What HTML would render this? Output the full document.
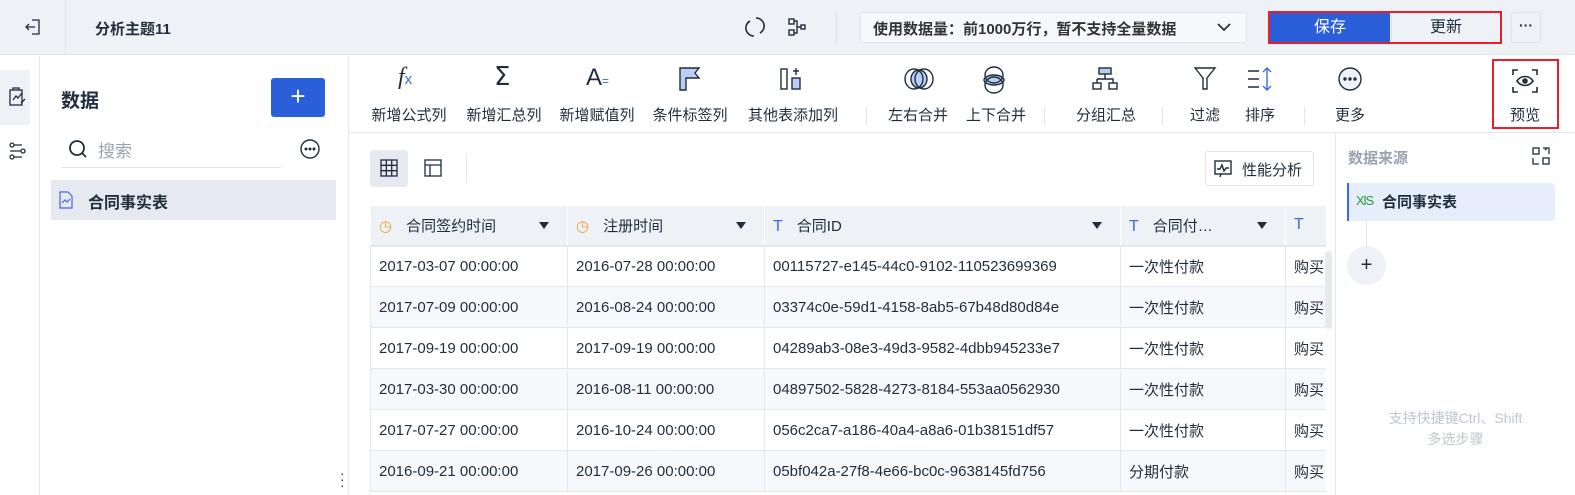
<!DOCTYPE html>
<html><head><meta charset="utf-8"><style>
*{box-sizing:border-box;margin:0;padding:0}
body{width:1575px;height:495px;overflow:hidden;background:#fff;font-family:"Liberation Sans","Noto Sans CJK SC",sans-serif;color:#1f2d3d;position:relative;font-size:14px}
.a{position:absolute}
.top{left:0;top:0;width:1575px;height:55px;background:#eef1f6;border-bottom:1px solid #dfe3ea}
.tb{text-align:center;font-size:15px;color:#1f2d3d}
.tbi{position:absolute;top:66px}
.lbl{position:absolute;top:104px;font-size:15px;white-space:nowrap;transform:translateX(-50%)}
.sep{position:absolute;top:107px;width:1px;height:18px;background:#dfe3ea}
table{border-collapse:collapse;position:absolute;left:370px;top:205px;table-layout:fixed}
td{border:1px solid #e4e7ee;height:41px;padding:0 8px;font-size:15px;white-space:nowrap;overflow:hidden}
th{background:#eef1f6;border:1px solid #fff;border-bottom:2px solid #e4e7ee;height:40px;text-align:left;font-weight:normal;font-size:15px;padding:0 8px;white-space:nowrap;overflow:hidden;position:relative}
tr:nth-child(odd) td{background:#f7f8fc}
.ar{position:absolute;right:18px;top:16px;width:0;height:0;border-left:5px solid transparent;border-right:5px solid transparent;border-top:7px solid #1f2d3d}
.T{color:#3d6be0;margin-right:14px;font-size:16px}
</style></head><body>
<div class="a top"></div>
<div class="a" style="left:65px;top:0;width:1px;height:55px;background:#dfe3ea"></div>
<svg class="a" style="left:24px;top:18px" width="18" height="18" viewBox="0 0 18 18" fill="none" stroke="#1f2d3d" stroke-width="1.3"><path d="M8 2h7v14H8M11 9H2M5 6L2 9l3 3"/></svg>
<div class="a" style="left:95px;top:18px;font-size:15px;font-weight:bold">分析主题11</div>
<svg class="a" style="left:744px;top:16px" width="22" height="22" viewBox="0 0 22 22" fill="none" stroke="#1f2d3d" stroke-width="1.6"><path d="M6 5a8 8 0 0 0 4 15M16 17a8 8 0 0 0-4-15"/></svg>
<svg class="a" style="left:786px;top:16px" width="22" height="22" viewBox="0 0 22 22" fill="none" stroke="#1f2d3d" stroke-width="1.4"><rect x="3" y="3" width="5" height="5"/><rect x="3" y="14" width="5" height="5"/><rect x="15" y="9" width="4" height="4"/><path d="M8 5h3v12H8M11 11h4"/></svg>
<div class="a" style="left:836px;top:12px;width:1px;height:32px;background:#dfe3ea"></div>
<div class="a" style="left:860px;top:12px;width:387px;height:31px;border:1px solid #dfe3ea;border-radius:3px;background:#f7f8fb;font-size:15px;font-weight:bold;padding:5px 12px;color:#333">使用数据量：前1000万行，暂不支持全量数据</div>
<svg class="a" style="left:1216px;top:21px" width="16" height="12" viewBox="0 0 16 12" fill="none" stroke="#333" stroke-width="1.8"><path d="M2 3l6 6 6-6"/></svg>
<div class="a" style="left:1268px;top:11px;width:234px;height:33px;border:2px solid #e81e2b"></div>
<div class="a" style="left:1270px;top:13px;width:120px;height:29px;background:#2b5fd9;color:#fff;font-size:16px;text-align:center;line-height:29px">保存</div>
<div class="a" style="left:1391px;top:13px;width:109px;height:29px;background:#eef1f6;font-size:16px;text-align:center;line-height:29px;border-left:1px solid #dfe3ea">更新</div>
<div class="a" style="left:1511px;top:12px;width:30px;height:31px;border:1px solid #dfe3ea;border-radius:2px;text-align:center;line-height:24px;font-weight:bold">···</div>
<!-- left rail -->
<div class="a" style="left:0;top:56px;width:40px;height:439px;background:#fff;border-right:1px solid #e4e7ee"></div>
<div class="a" style="left:0;top:70px;width:30px;height:55px;background:#eef1f6"></div>
<svg class="a" style="left:8px;top:87px" width="20" height="20" viewBox="0 0 20 20" fill="none" stroke="#1f2d3d" stroke-width="1.3"><rect x="2" y="3" width="12" height="15"/><path d="M5 3V1h6v2M5 13l3-4 2 2 4-5M13 16l4-4"/></svg>
<svg class="a" style="left:8px;top:141px" width="20" height="20" viewBox="0 0 20 20" fill="none" stroke="#1f2d3d" stroke-width="1.3"><circle cx="4" cy="4" r="2"/><circle cx="4" cy="16" r="2"/><circle cx="15" cy="10" r="2"/><path d="M6 4h8M2 10h11M6 16h8"/></svg>
<!-- data panel -->
<div class="a" style="left:348px;top:56px;width:1px;height:439px;background:#e4e7ee"></div>
<div class="a" style="left:61px;top:86px;font-size:19px;font-weight:bold">数据</div>
<div class="a" style="left:271px;top:78px;width:54px;height:39px;background:#2b5fd9;border-radius:3px;color:#fff;text-align:center;line-height:36px;font-size:26px">+</div>
<svg class="a" style="left:67px;top:138px" width="22" height="22" viewBox="0 0 22 22" fill="none" stroke="#1f2d3d" stroke-width="1.8"><circle cx="10" cy="10" r="7"/><path d="M15 15l4 4"/></svg>
<div class="a" style="left:98px;top:137px;font-size:17px;color:#9aa3b0">搜索</div>
<div class="a" style="left:61px;top:167px;width:220px;height:1px;background:#dfe3ea"></div>
<svg class="a" style="left:299px;top:138px" width="22" height="22" viewBox="0 0 22 22" fill="none" stroke="#1f2d3d" stroke-width="1.4"><circle cx="11" cy="11" r="9"/><circle cx="7" cy="11" r=".8" fill="#1f2d3d"/><circle cx="11" cy="11" r=".8" fill="#1f2d3d"/><circle cx="15" cy="11" r=".8" fill="#1f2d3d"/></svg>
<div class="a" style="left:51px;top:180px;width:285px;height:40px;background:#e6e9f0"></div>
<svg class="a" style="left:58px;top:191px" width="16" height="18" viewBox="0 0 16 18" fill="none" stroke="#3d6be0" stroke-width="1.2"><path d="M2 1h8l4 4v12H2z"/><path d="M4 12l3-3 2 2 3-3"/></svg>
<div class="a" style="left:88px;top:189px;font-size:16px;font-weight:bold">合同事实表</div>
<div class="a" style="left:340px;top:470px;font-size:14px;line-height:6px;color:#333">·<br>·<br>·</div>
<!-- toolbar -->
<div class="a" style="left:349px;top:132px;width:1226px;height:1px;background:#e4e7ee"></div>
<div class="tbi" style="left:398px;font-style:italic;font-family:'Liberation Serif',serif;font-size:24px;top:64px;color:#1f2d3d">f<span style="font-size:15px;color:#3d6be0;font-style:normal;font-family:'Liberation Sans'">x</span></div>
<div class="tbi" style="left:494px;font-size:26px;top:62px;font-family:'DejaVu Sans'">Σ</div>
<div class="tbi" style="left:586px;font-size:24px;top:64px">A<span style="font-size:12px;color:#3d6be0">=</span></div>
<svg class="tbi" style="left:678px" width="24" height="26" viewBox="0 0 24 26" fill="none" stroke="#1f2d3d" stroke-width="1.4"><path d="M2 2h19l-4 5 4 5H8v12H2z" fill="#b9cdf5"/></svg>
<svg class="tbi" style="left:780px" width="24" height="26" viewBox="0 0 24 26" fill="none" stroke="#1f2d3d" stroke-width="1.4"><rect x="1" y="3" width="6" height="20"/><rect x="12" y="12" width="8" height="11" fill="#b9cdf5"/><path d="M16 2v7M13 5h6"/></svg>
<div class="sep" style="left:866px"></div>
<svg class="tbi" style="left:903px" width="32" height="26" viewBox="0 0 32 26" fill="none" stroke="#1f2d3d" stroke-width="1.4"><path d="M16 4a8 9 0 0 1 0 18a8 9 0 0 1 0-18z" fill="#b9cdf5"/><ellipse cx="11" cy="13" rx="9" ry="10"/><ellipse cx="21" cy="13" rx="9" ry="10"/></svg>
<svg class="tbi" style="left:980px" width="28" height="28" viewBox="0 0 28 28" fill="none" stroke="#1f2d3d" stroke-width="1.4"><path d="M4 14a10 5 0 0 0 20 0a10 5 0 0 0-20 0z" fill="#b9cdf5"/><ellipse cx="14" cy="9" rx="9" ry="8"/><ellipse cx="14" cy="19" rx="9" ry="8"/></svg>
<div class="sep" style="left:1044px"></div>
<svg class="tbi" style="left:1092px" width="26" height="26" viewBox="0 0 26 26" fill="none" stroke="#1f2d3d" stroke-width="1.4"><rect x="7" y="2" width="12" height="6" fill="#b9cdf5"/><path d="M13 8v5M5 13h16v4M5 13v4"/><rect x="1" y="17" width="8" height="6"/><rect x="17" y="17" width="8" height="6"/></svg>
<div class="sep" style="left:1162px"></div>
<svg class="tbi" style="left:1193px" width="24" height="26" viewBox="0 0 24 26" fill="none" stroke="#1f2d3d" stroke-width="1.4"><path d="M2 2h20l-8 10v11h-4V12z"/></svg>
<svg class="tbi" style="left:1246px" width="28" height="26" viewBox="0 0 28 26" fill="none" stroke="#1f2d3d" stroke-width="1.4"><path d="M2 5h11M2 13h11M2 21h11"/><path d="M21 2v22M17 6l4-4 4 4M17 20l4 4 4-4" stroke="#3d6be0"/></svg>
<div class="sep" style="left:1304px"></div>
<svg class="tbi" style="left:1337px" width="26" height="26" viewBox="0 0 26 26" fill="none" stroke="#1f2d3d" stroke-width="1.4"><circle cx="13" cy="13" r="11" fill="#eef2fb"/><circle cx="8" cy="13" r="1" fill="#1f2d3d"/><circle cx="13" cy="13" r="1" fill="#1f2d3d"/><circle cx="18" cy="13" r="1" fill="#1f2d3d"/></svg>
<div class="a" style="left:1492px;top:59px;width:67px;height:70px;border:2px solid #e81e2b"></div>
<svg class="tbi" style="left:1512px;top:69px" width="26" height="24" viewBox="0 0 26 24" fill="none" stroke="#1f2d3d" stroke-width="1.6"><path d="M1 6V1h5M20 1h5v5M1 18v5h5M20 23h5v-5"/><path d="M5 12c4-6 12-6 16 0c-4 6-12 6-16 0z"/><circle cx="13" cy="12" r="2" fill="#1f2d3d"/></svg>
<div class="lbl" style="left:409px">新增公式列</div>
<div class="lbl" style="left:504px">新增汇总列</div>
<div class="lbl" style="left:597px">新增赋值列</div>
<div class="lbl" style="left:690px">条件标签列</div>
<div class="lbl" style="left:793px">其他表添加列</div>
<div class="lbl" style="left:918px">左右合并</div>
<div class="lbl" style="left:996px">上下合并</div>
<div class="lbl" style="left:1106px">分组汇总</div>
<div class="lbl" style="left:1205px">过滤</div>
<div class="lbl" style="left:1260px">排序</div>
<div class="lbl" style="left:1350px">更多</div>
<div class="lbl" style="left:1525px">预览</div>
<!-- table tools -->
<div class="a" style="left:370px;top:150px;width:38px;height:37px;background:#e6e9f0;border-radius:3px"></div>
<svg class="a" style="left:380px;top:159px" width="18" height="18" viewBox="0 0 18 18" fill="none" stroke="#1f2d3d" stroke-width="1.3"><rect x="1" y="1" width="16" height="16"/><path d="M6.3 1v16M11.7 1v16M1 6.3h16M1 11.7h16"/></svg>
<svg class="a" style="left:424px;top:159px" width="18" height="18" viewBox="0 0 18 18" fill="none" stroke="#1f2d3d" stroke-width="1.3"><rect x="1" y="1" width="16" height="16"/><path d="M1 6h16M6 6v11"/></svg>
<div class="a" style="left:466px;top:155px;width:1px;height:28px;background:#e4e7ee"></div>
<div class="a" style="left:1205px;top:151px;width:109px;height:35px;border:1px solid #dfe3ea;border-radius:3px;font-size:15px;padding:7px 0 0 36px">性能分析</div>
<svg class="a" style="left:1214px;top:160px" width="18" height="18" viewBox="0 0 18 18" fill="none" stroke="#1f2d3d" stroke-width="1.4"><rect x="1" y="1" width="16" height="13"/><path d="M3 9h3l2-4 2 6 2-3h3M7 14l-1 3"/></svg>
<table>
<colgroup><col style="width:197px"><col style="width:197px"><col style="width:356px"><col style="width:165px"><col style="width:41px"></colgroup>
<tr><th><span style="color:#f0a030;margin-right:14px">◷</span>合同签约时间<i class="ar"></i></th><th><span style="color:#f0a030;margin-right:14px">◷</span>注册时间<i class="ar"></i></th><th><span class="T">T</span>合同ID<i class="ar"></i></th><th><span class="T">T</span>合同付…<i class="ar"></i></th><th><span class="T">T</span></th></tr>
<tr><td>2017-03-07 00:00:00</td><td>2016-07-28 00:00:00</td><td>00115727-e145-44c0-9102-110523699369</td><td>一次性付款</td><td>购买</td></tr>
<tr><td>2017-07-09 00:00:00</td><td>2016-08-24 00:00:00</td><td>03374c0e-59d1-4158-8ab5-67b48d80d84e</td><td>一次性付款</td><td>购买</td></tr>
<tr><td>2017-09-19 00:00:00</td><td>2017-09-19 00:00:00</td><td>04289ab3-08e3-49d3-9582-4dbb945233e7</td><td>一次性付款</td><td>购买</td></tr>
<tr><td>2017-03-30 00:00:00</td><td>2016-08-11 00:00:00</td><td>04897502-5828-4273-8184-553aa0562930</td><td>一次性付款</td><td>购买</td></tr>
<tr><td>2017-07-27 00:00:00</td><td>2016-10-24 00:00:00</td><td>056c2ca7-a186-40a4-a8a6-01b38151df57</td><td>一次性付款</td><td>购买</td></tr>
<tr><td>2016-09-21 00:00:00</td><td>2017-09-26 00:00:00</td><td>05bf042a-27f8-4e66-bc0c-9638145fd756</td><td>分期付款</td><td>购买</td></tr>
</table>
<div class="a" style="left:1326px;top:205px;width:9px;height:290px;background:#fff"></div>
<div class="a" style="left:1325px;top:251px;width:7px;height:78px;background:#e6e9f0;border-radius:4px"></div>
<!-- right panel -->
<div class="a" style="left:1335px;top:133px;width:1px;height:362px;background:#e4e7ee"></div>
<div class="a" style="left:1348px;top:147px;font-size:15px;font-weight:bold;color:#9aa3b0">数据来源</div>
<svg class="a" style="left:1532px;top:147px" width="18" height="18" viewBox="0 0 18 18" fill="none" stroke="#1f2d3d" stroke-width="1.3"><rect x="1" y="1" width="6" height="6"/><rect x="11" y="11" width="6" height="6"/><path d="M1 11v6h6M11 1h6v6M13 3l2-2"/></svg>
<div class="a" style="left:1347px;top:183px;width:208px;height:38px;background:#e6edfb;border-left:2px solid #3d6be0;border-radius:0 4px 4px 0"></div>
<div class="a" style="left:1356px;top:193px;font-size:13px;color:#2a9d3a;font-family:'Liberation Sans Narrow','Liberation Sans';letter-spacing:-1px">XlS</div>
<div class="a" style="left:1382px;top:191px;font-size:15px;font-weight:bold">合同事实表</div>
<div class="a" style="left:1366px;top:221px;width:1px;height:28px;background:#dfe3ea"></div>
<div class="a" style="left:1347px;top:246px;width:39px;height:39px;border-radius:50%;background:#eef1f6;text-align:center;line-height:38px;font-size:20px">+</div>
<div class="a" style="left:1336px;top:408px;width:239px;text-align:center;font-size:14px;color:#c0c6d0;line-height:21px">支持快捷键Ctrl、Shift<br>多选步骤</div>
</body></html>
